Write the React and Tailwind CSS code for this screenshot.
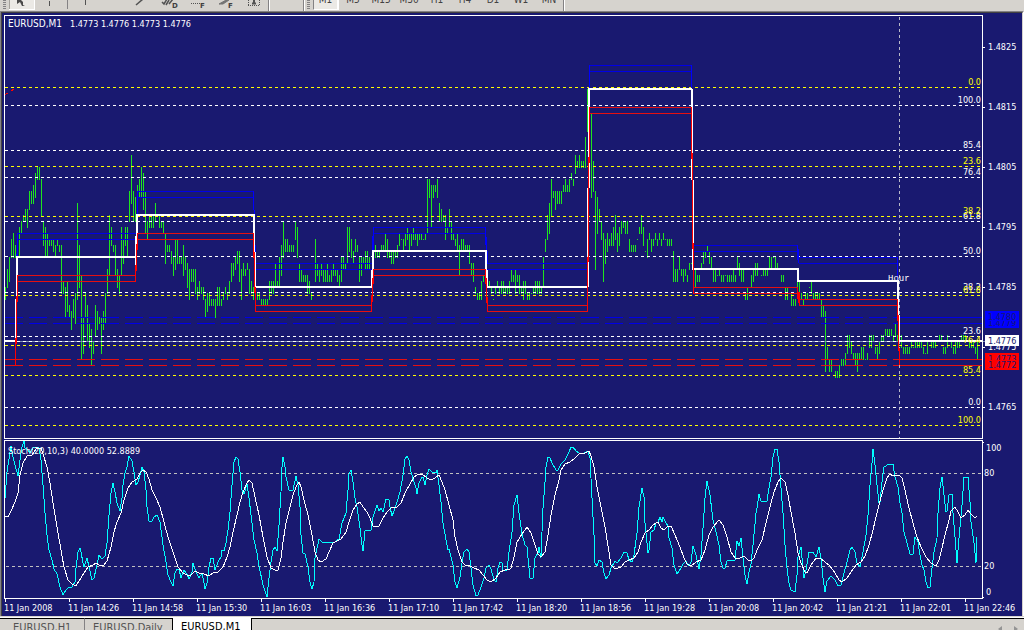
import { useState } from 'react'

// One bar is [high, low] in pips above 1.4700, bars stand 2px apart
const BAR_RUNS = [
    { x: 5, bars: '85-83 88-85 90-86 93-90 94-90 92-90 . 95-90 96-94 97-96 98-96 98-95 101-98 101-99 102-99 104-100 105-103 105-103 103-97 96-92 95-90 94-90 93-92 93-92 93-91 92-90 93-92 92-91 92-84 86-84 85-80 86-81 82-80 81-78 83-80 84-79 99-83 92-85 87-73 80-74 84-80 82-76 79-75 78-72 76-74 82-77 81-78 80-79 80-74 81-78 84-79 88-84 97-87 95-92 92-91 92-87 88-85 87-84 95-87 93-89 95-92 95-90 101-96 107-99 101-96 100-96' },
    { x: 137, bars: '102-97 103-100 105-100 104-98 101-94 96-93 97-95 97-95 97-95 99-96 97-97 97-95 96-95 96-94 94-89 92-91 92-91 91-89 90-87 93-88 93-89 90-89 90-89 92-87 90-88 89-85 88-83 88-86 88-86 88-84 85-83 86-84 85-84 85-83 83-80 84-81 84-82 83-82 83-82 83-80 85-82 85-82 83-82 84-83 85-84 84-83 86-84 89-86 89-87 90-88 91-89 91-86 88-83 89-87 88-87 89-88 88-84 86-84 85-83' },
    { x: 257, bars: '84-83 84-83 83-82 83-82 83-82 83-82 86-83 86-84 86-84 89-85 86-85 90-85 92-87 96-90 93-91 93-91 92-91 92-91 92-91 96-93 95-90 89-86 88-86 87-86 87-86 87-84 86-84 84-83 . 93-86 89-87 88-86 89-87 88-86 88-86 89-86 87-86 88-86 89-87 88-87 88-86 87-85 90-86 90-88 89-88 95-89 95-91 93-90 91-89 93-91 92-91 90-86 90-87 90-89 91-88 91-88 90-88' },
    { x: 373, bars: '93-91 92-90 91-90 91-90 92-91 92-91 94-91 93-90 91-90 91-89 91-89 91-90 92-90 94-92 93-93 93-91 94-92 95-93 94-91 94-92 95-93 94-93 94-92 94-93 94-93 93-93 94-93 103-94 103-100 102-95 102-100 102-101 103-100 99-96 98-96 97-96 97-93 95-94 98-95 96-93 94-93 93-92 94-91 92-87 93-91 93-91 92-91 92-91 92-89 89-87 89-86 85-84 84-83 84-83 86-83 87-86' },
    { x: 487, bars: '86-85 86-85 85-84 83-83 85-84 86-85 85-84 86-84 86-84 85-84 85-84 86-84 88-86 87-86 88-84 87-86 87-84 85-84 86-83 86-84 84-83 84-83 84-84 85-84 86-84 86-84 86-84 85-84 90-85 93-91 97-93 99-94 103-97 101-100 101-98 101-99 101-99 101-99 102-101 103-101 102-101 103-101 104-103 103-102 107-104 106-105 107-105 106-105 106-105 110-105 118-111' },
    { x: 591, bars: '114-100 106-101 101-88 100-94 98-96 96-93 94-86 93-89 94-91 93-92 94-92 95-92 97-93 94-91 95-92 96-94 96-95 96-94 96-94 93-91 92-91 92-91 92-91 93-93 95-94 97-94 95-92 91-91 93-90 94-93 93-91 93-92 94-93 93-92 94-93 93-92 94-93 93-93 93-92 93-92 93-92 91-86 88-86 88-86 90-88 88-87 88-86 88-87 87-86 89-88 89-89' },
    { x: 695, bars: '88-85 87-86 87-86 89-88 91-89 91-90 92-91 91-89 90-88 88-86 88-86 87-87 88-87 87-86 87-86 87-87 87-86 87-86 87-86 88-86 87-86 90-88 89-87 88-86 88-86 84-83 85-83 . 87-85 88-86 89-87 89-87 . 87-87 88-87 88-87 88-87 90-88 90-88 90-90 90-88 89-88 . 87-86 87-86 85-83 85-83 . 84-82 83-82 83-82 87-84' },
    { x: 799, bars: '86-82 84-83 83-82 84-83 84-83 85-85 86-84 84-83 84-83 84-83 84-83 83-80 82-80 81-71 75-73 73-71 73-71 72-72 71-70 71-70 72-70 73-72 73-72 74-72 77-74 77-75 76-74 74-73 74-72 74-71 74-73 75-73 75-73 73-73 74-73 77-75 77-75 77-76 75-74 75-73 76-74 77-76 77-76 78-77 78-77 78-77 78-77 77-76 79-77 77-76' },
    { x: 901, bars: '77-75 75-74 75-74 75-74 75-74 76-75 75-75 76-75 76-75 76-75 76-75 75-74 74-74 76-74 76-76 76-75 76-75 76-75 76-76 77-76 77-76 75-74 75-74 77-75 76-76 76-75 75-74 76-74 76-75 76-75 77-76 77-76 77-76 76-76 76-75 76-75 76-75 75-74 76-73' },
]

const priceY = (pips) => 287 - 6 * (pips - 85)

const BAR_PATH = BAR_RUNS.flatMap((run) =>
    run.bars.split(' ').map((bar, i) => {
        if (bar === '.') return ''
        const [high, low] = bar.split('-').map(Number)
        return `M${run.x + i * 2} ${priceY(high)}h1V${priceY(low) + 1}h-1z`
    })
).join('')

// Hourly level: [from x, to x, y]
const LEVELS = [
    [5, 16, 341],
    [17, 136, 257],
    [137, 254, 215],
    [255, 372, 287],
    [373, 486, 251],
    [487, 588, 287],
    [589, 692, 89],
    [693, 798, 269],
    [799, 898, 281],
    [899, 982, 341],
]

// Vertical joins between the levels: [x, width, top, bottom]
const BLUE_JOINS = [
    [17, 1, 233, 257], [16, 2, 254, 258], [137, 1, 191, 215], [253, 1, 191, 210], [254, 1, 210, 240], [254, 2, 245, 264],
    [373, 1, 227, 243], [372, 2, 236, 251], [485, 1, 227, 245], [486, 1, 237, 251], [487, 1, 251, 264],
    [589, 1, 65, 89], [691, 1, 65, 89], [797, 1, 245, 260], [798, 1, 249, 263], [897, 1, 257, 281],
]
const WHITE_JOINS = [
    [16, 2, 256, 296], [15, 1, 299, 338], [136, 2, 214, 244], [135, 1, 236, 265], [253, 2, 214, 252], [255, 1, 252, 287],
    [372, 2, 250, 278], [371, 1, 270, 287], [485, 2, 250, 278], [487, 1, 270, 287], [588, 2, 88, 157], [589, 1, 163, 188],
    [587, 1, 188, 287], [588, 1, 262, 287], [691, 2, 89, 153], [691, 1, 159, 180], [693, 1, 180, 243], [692, 1, 249, 270],
    [797, 2, 268, 282], [897, 2, 280, 315], [899, 1, 315, 341],
]
const RED_JOINS = [
    [15, 1, 338, 366], [16, 1, 296, 344], [17, 1, 275, 302], [136, 1, 244, 271], [137, 1, 233, 250], [135, 1, 265, 282],
    [253, 1, 233, 258], [254, 1, 252, 293], [255, 1, 287, 312], [373, 1, 269, 284], [372, 1, 278, 302], [371, 1, 295, 312],
    [485, 1, 269, 284], [486, 1, 278, 303], [487, 1, 297, 312], [589, 1, 107, 163], [588, 1, 157, 262], [587, 1, 257, 312],
    [691, 1, 107, 159], [692, 1, 153, 249], [693, 1, 243, 294], [797, 1, 287, 299], [798, 2, 292, 303], [799, 1, 299, 306],
    [897, 1, 299, 321], [898, 1, 315, 351], [899, 1, 348, 365], [12, 2, 89, 90], [11, 2, 90, 91], [5, 1, 94, 95], [6, 2, 93, 94],
]

const FIB_YELLOW = [
    ['0.0', 87], ['23.6', 166], ['38.2', 216], ['61.8', 295], ['76.4', 345], ['85.4', 375], ['100.0', 425],
]
const FIB_WHITE = [
    ['100.0', 105], ['85.4', 150], ['76.4', 177], ['61.8', 221], ['50.0', 256], ['38.2', 292], ['23.6', 336], ['', 341], ['0.0', 407],
]

const PRICES = [
    ['1.4825', 47], ['1.4815', 107], ['1.4805', 167], ['1.4795', 227], ['1.4785', 287], ['1.4775', 347], ['1.4765', 407],
]

const STOCH_MAIN =
    '5,498 7,472 10,452 11,446 13,457 15,465 18,476 20,460 22,447 24,441 25,448 28,450 30,453 33,448 36,447 39,448 41,460 43,485 45,513 47,535 49,550 52,560 54,569 57,574 60,587 63,595 66,590 69,587 72,587 75,582 76,568 78,552 80,548 81,552 83,563 84,567 87,558 89,567 92,580 94,578 97,565 99,555 102,559 105,556 107,543 109,515 111,493 113,483 115,492 117,503 120,511 122,498 123,485 125,473 127,467 129,456 132,461 134,472 136,485 138,482 140,475 142,467 144,472 146,490 147,507 149,521 152,521 154,517 157,515 160,522 163,545 166,562 168,575 171,582 173,586 175,573 177,569 179,569 181,578 184,570 187,574 189,579 192,572 193,563 196,572 199,578 202,573 204,583 205,589 207,583 209,567 211,558 213,558 215,570 218,562 221,557 222,550 224,551 226,543 228,530 230,512 232,485 234,462 236,457 238,459 240,472 242,490 244,494 247,484 249,498 252,523 254,540 257,553 259,566 263,585 267,597 269,578 271,562 273,550 275,547 277,551 279,525 281,492 282,467 283,457 285,467 286,477 289,490 293,490 296,476 298,485 300,507 301,535 303,553 305,554 308,567 310,582 312,589 314,582 315,558 319,539 322,542 335,542 339,539 342,523 346,513 348,490 349,474 351,470 353,482 355,498 357,507 360,528 362,545 363,551 365,531 371,530 373,517 375,511 377,505 379,511 381,508 383,512 386,499 389,500 390,507 392,516 394,511 397,502 400,492 403,475 405,459 407,456 409,460 411,472 414,482 416,488 417,494 419,483 422,477 423,477 425,485 427,475 429,469 432,472 436,473 437,470 439,485 441,502 443,523 446,540 448,550 449,549 451,557 453,565 455,582 457,588 460,577 462,563 464,552 467,549 469,552 471,568 473,585 476,596 478,595 481,587 484,578 486,568 489,565 491,569 494,580 496,582 498,568 500,562 502,563 503,571 507,570 509,552 512,532 514,505 517,495 519,513 522,534 525,545 527,547 529,568 530,578 533,578 535,558 538,553 539,547 541,558 542,532 543,508 545,482 546,467 548,457 550,458 552,463 556,470 558,470 561,464 565,460 569,452 571,447 573,447 576,451 580,454 584,453 588,451 590,458 592,498 594,535 595,563 597,566 599,560 602,562 604,573 606,579 609,575 611,568 615,561 617,563 621,558 624,552 627,553 629,560 632,562 634,555 637,533 639,507 642,488 644,497 645,523 648,553 649,550 651,532 654,530 656,523 658,522 660,517 662,522 663,517 666,523 668,526 669,538 672,548 674,565 677,574 681,568 683,564 686,561 689,566 691,562 693,546 696,555 699,569 701,555 703,528 705,498 707,481 710,495 713,520 716,532 719,545 721,562 723,568 725,568 727,561 735,560 737,541 739,546 741,538 743,558 745,575 747,584 749,572 751,564 753,545 756,513 757,508 759,494 761,501 767,501 769,488 771,477 773,457 775,449 777,449 779,462 781,488 783,513 785,545 787,568 789,583 791,590 795,592 797,575 798,557 801,547 802,558 804,578 806,570 809,552 813,552 816,557 819,547 821,558 823,578 825,592 827,581 831,576 835,580 838,586 841,585 844,573 847,562 850,550 852,547 855,552 857,563 860,567 863,552 866,535 868,515 870,485 872,463 873,449 875,465 877,485 879,503 880,502 882,482 884,467 889,464 893,464 895,477 898,487 900,503 902,513 904,532 907,543 910,554 913,554 915,537 918,542 920,555 922,565 924,570 926,582 928,588 930,587 932,568 934,552 937,538 938,513 940,488 942,477 944,495 946,512 947,511 949,495 952,494 953,513 955,537 957,563 959,538 962,505 964,477 968,477 970,502 971,522 974,543 976,563 977,537'

const STOCH_SIGNAL =
    '5,516 8,517 11,511 15,502 18,493 20,475 23,463 27,456 32,455 36,449 41,448 43,454 47,467 50,483 53,503 57,527 61,550 64,567 68,580 72,584 76,586 79,581 84,573 88,567 93,565 96,563 99,565 104,565 107,561 111,547 114,532 117,522 121,513 124,500 128,488 132,482 137,479 140,473 143,470 146,472 149,479 152,490 156,498 160,507 164,522 168,537 173,552 178,567 183,573 187,575 191,575 195,571 199,573 204,574 209,576 213,573 218,572 223,567 227,557 230,547 233,532 237,515 240,502 243,492 247,483 249,480 252,483 255,497 259,515 263,537 267,557 271,568 275,570 278,570 281,558 283,542 286,523 290,507 293,495 296,487 299,482 301,487 304,500 308,515 312,535 315,552 318,560 321,562 326,559 329,552 333,543 337,541 341,539 346,532 349,522 353,510 357,504 360,502 363,507 367,512 370,518 373,526 379,526 383,518 387,512 391,508 397,507 401,503 405,493 410,484 414,477 419,474 422,474 427,478 431,480 435,478 439,475 442,482 445,490 449,505 453,520 455,537 458,550 462,562 465,565 470,566 474,568 479,570 483,575 487,580 491,582 496,578 500,572 505,570 510,569 511,568 514,557 517,542 522,534 527,527 531,533 535,545 538,554 541,557 545,552 548,535 551,515 555,495 559,480 561,470 565,464 570,462 574,459 579,454 585,453 589,451 591,456 594,467 597,487 601,507 605,527 609,552 611,565 615,569 621,567 625,562 629,560 634,558 638,552 641,542 645,533 649,530 653,525 658,522 661,528 664,530 668,526 671,526 675,535 680,547 684,558 687,564 691,566 696,562 701,560 705,550 709,535 713,527 719,520 723,525 727,537 731,552 735,558 740,558 744,556 748,560 752,560 754,558 757,550 762,540 766,523 770,507 774,492 778,482 781,478 785,482 788,495 791,512 795,533 798,553 801,563 805,572 807,573 811,565 816,558 820,558 825,562 830,566 835,573 839,580 842,582 847,578 851,572 856,565 861,562 865,556 869,545 873,530 876,517 879,505 883,490 887,478 890,474 893,476 899,475 902,478 905,490 909,508 913,523 917,537 921,547 926,557 931,563 936,566 939,560 942,548 945,535 949,520 951,511 955,507 958,512 961,518 965,515 968,510 971,514 975,518 977,516'

const TIMES = [
    '11 Jan 2008', '11 Jan 14:26', '11 Jan 14:58', '11 Jan 15:30', '11 Jan 16:03', '11 Jan 16:36', '11 Jan 17:10', '11 Jan 17:42',
    '11 Jan 18:20', '11 Jan 18:56', '11 Jan 19:28', '11 Jan 20:08', '11 Jan 20:42', '11 Jan 21:21', '11 Jan 22:01', '11 Jan 22:46',
]

const TIMEFRAMES = ['M1', 'M5', 'M15', 'M30', 'H1', 'H4', 'D1', 'W1', 'MN']
const TABS = [
    { name: 'EURUSD,H1', size: 'w-[85px] pl-[13px] border-r border-r-[#848284]' },
    { name: 'EURUSD,Daily', size: 'w-[87px] pl-2' },
    { name: 'EURUSD,M1', size: 'w-20 pl-2' },
]

function Joins({ items, color }) {
    return items.map(([x, w, y1, y2]) => (
        <rect key={`${x}-${y1}`} x={x} y={y1} width={w} height={y2 - y1} fill={color} />
    ))
}

function Channel({ offsets, color }) {
    return LEVELS.slice(1).flatMap(([x1, x2, y]) =>
        offsets.map((d) => <rect key={`${x1}${d}`} x={x1} y={y + d} width={x2 - x1} height="1" fill={color} />)
    )
}

function FibLines({ lines, color }) {
    return lines.map(([label, y]) => (
        <line key={y} x1="5" x2="981" y1={y + 0.5} y2={y + 0.5} stroke={color} strokeDasharray="3 3" />
    ))
}

function FibLabels({ lines, color }) {
    return lines.map(([label, y]) => (
        <text key={y} x="981" y={y - 2} textAnchor="end" fill={color}>{label}</text>
    ))
}

function PricePlot() {
    return (
        <svg className="block w-full h-[422px] text-[9px]" shapeRendering="crispEdges">
            <g transform="translate(-5 -16)">
                <path d={BAR_PATH} fill="#1ee61e" />
                <rect x="5" y="341" width="977" height="1" fill="#7f8fb5" />

                <Channel offsets={[-24, -18]} color="#0000e6" />
                <Channel offsets={[18, 24]} color="#e61010" />
                {[317, 323].map((y) => (
                    <line key={y} x1="5" x2="982" y1={y + 0.5} y2={y + 0.5} stroke="#0000e6" strokeDasharray="18 6" />
                ))}
                {[359, 365].map((y) => (
                    <line key={y} x1="5" x2="982" y1={y + 0.5} y2={y + 0.5} stroke="#e61010" strokeDasharray="18 6" />
                ))}

                <FibLines lines={FIB_YELLOW} color="#ffff00" />
                <FibLines lines={FIB_WHITE} color="#ffffff" />
                <line x1="899.5" x2="899.5" y1="17" y2="438" stroke="#b8b8c8" strokeDasharray="3 3" />

                <Joins items={BLUE_JOINS} color="#0000ff" />
                {LEVELS.map(([x1, x2, y]) => (
                    <rect key={x1} x={x1} y={y - 1} width={x2 - x1} height="2" fill="#fff" />
                ))}
                <Joins items={WHITE_JOINS} color="#ffffff" />
                <Joins items={RED_JOINS} color="#ff0000" />

                <FibLabels lines={FIB_WHITE} color="#ffffff" />
                <FibLabels lines={FIB_YELLOW} color="#ffff00" />
                <text x="888" y="281" fill="#fff" className="font-['Liberation_Mono',monospace]">Hour</text>
                <text x="8" y="27" fill="#fff" className="text-[10px]">EURUSD,M1</text>
                <text x="70" y="27" fill="#fff">1.4773 1.4776 1.4773 1.4776</text>
            </g>
        </svg>
    )
}

function PriceScale() {
    return (
        <svg className="block w-full h-full text-[9px]" shapeRendering="crispEdges">
            <g transform="translate(-983 -15)">
                {PRICES.map(([label, y]) => (
                    <g key={label} fill="#fff">
                        <rect x="983" y={y} width="2" height="1" />
                        <text x="988" y={y + 3}>{label}</text>
                    </g>
                ))}
                <rect x="985" y="311" width="34" height="17" fill="#0000ff" />
                <text x="988" y="326" fill="#191970">1.4779</text>
                <rect x="985" y="311" width="34" height="10" fill="#0000ff" />
                <text x="988" y="320" fill="#191970">1.4780</text>
                <rect x="983" y="341" width="2" height="1" fill="#7f8fb5" />
                <rect x="985" y="335" width="34" height="11" fill="#fff" />
                <text x="988" y="344" fill="#191970">1.4776</text>
                <rect x="985" y="353" width="34" height="17" fill="#ff0000" />
                <text x="988" y="362" fill="#191970">1.4773</text>
                <rect x="985" y="360" width="34" height="10" fill="#ff0000" />
                <text x="988" y="368" fill="#191970">1.4772</text>
            </g>
        </svg>
    )
}

function StochPlot() {
    return (
        <svg className="block w-full h-[157px] text-[9px]" shapeRendering="crispEdges">
            <g transform="translate(-5 -441)" fill="none">
                <line x1="6" x2="982" y1="473.5" y2="473.5" stroke="#c0c0c0" strokeDasharray="3 3" />
                <line x1="6" x2="982" y1="566.5" y2="566.5" stroke="#c0c0c0" strokeDasharray="3 3" />
                <polyline points={STOCH_MAIN} stroke="#00ffff" />
                <polyline points={STOCH_SIGNAL} stroke="#ffffff" />
                <text x="8" y="454" fill="#fff">Stoch(20,10,3) 40.0000 52.8889</text>
            </g>
        </svg>
    )
}

function Grip() {
    return (
        <div className="flex flex-col gap-px pb-[2px]">
            {[0, 1, 2, 3, 4].map((i) => <i key={i} className="w-[3px] h-px bg-[#848284]" />)}
        </div>
    )
}

function ToolIcons() {
    return (
        <svg width="259" height="10" viewBox="9 0 259 10" fill="none" stroke="#525252" role="img" aria-label="Drawing tools">
            <rect x="9" y="0" width="25" height="9" fill="#ebe9e5" stroke="none" />
            <path d="M34.500 0V9.500M9 9.500H35" stroke="#fff" />
            <path d="M9.500 0V9" stroke="#a5a29c" />
            <path d="M17 0h4l2 2v3l2 1h-3l-2-4-3 2z" fill="#4a4a4a" stroke="none" />
            <path d="M49.500 1V6M85.500 0V5" />
            <path d="M67.500 0V9" stroke="#848284" />
            <path d="M136 5l7-6" strokeWidth="1.500" />
            <path d="M162 2l2 2 3-5M166 5l3-5M169 4l4-5" strokeWidth="1.500" />
            <path d="M191 3.500H202" strokeDasharray="1 1" />
            <path d="M219 4l9-5 1 1-6 4z" fill="#737373" stroke="#737373" />
            <path d="M248.500 0V6M248 5.500H260M259.500 0V6" strokeDasharray="1 1" />
            <path d="M254 0V3M252 3.500h4" strokeWidth="2" />
            <g fill="#424142" stroke="none" className="text-[7px] font-bold font-['DejaVu_Sans',sans-serif]">
                <text x="172" y="8">D</text>
                <text x="200" y="8">F</text>
                <text x="228" y="8">F</text>
            </g>
        </svg>
    )
}

export default function App() {
    const [frame, setFrame] = useState('M1')
    const [tab, setTab] = useState('EURUSD,M1')

    return (
        <div className="h-screen flex flex-col overflow-hidden bg-[#d6d3ce] text-[10px] leading-none font-['DejaVu_Sans_Condensed','DejaVu_Sans',sans-serif]">
            {/* Toolbar */}
            <header className="h-[11px] shrink-0 flex items-start overflow-hidden">
                <div className="h-full flex items-start pl-[3px] gap-[3px] border-r border-[#848284]">
                    <Grip />
                    <ToolIcons />
                </div>
                <div className="w-[35px] h-full border-l border-l-white border-r border-r-[#848284]" />
                <div className="h-full flex items-start pl-[2px] gap-[3px] border-l border-l-white border-r border-r-[#848284]">
                    <Grip />
                    <nav className="h-[10px] flex items-end overflow-hidden">
                        {TIMEFRAMES.map((t) => (
                            <button key={t} type="button" onClick={() => setFrame(t)}
                                className={`h-5 shrink-0 flex justify-center items-center text-[#424142] ${frame === t ? 'w-[26px] bg-[#ebe9e5] border-r-2 border-b border-white border-l border-l-[#848284]' : 'w-7'}`}>
                                {t}
                            </button>
                        ))}
                    </nav>
                </div>
                <div className="w-px h-full bg-white" />
            </header>

            {/* Chart window */}
            <main className="shrink-0 bg-[#191970] border-t border-t-[#848284] border-l border-l-[#848284] border-r border-r-white">
                <div className="border-t border-l border-[#424142] border-r border-r-[#d6d3ce]">
                    <div className="pl-[2px] pt-[2px]">
                        <section className="flex">
                            <div className="flex-1 min-w-0 border border-white"><PricePlot /></div>
                            <div className="w-[39px]"><PriceScale /></div>
                        </section>
                        <section className="flex pt-px text-white text-[9px]">
                            <div className="flex-1 min-w-0 border border-white"><StochPlot /></div>
                            <svg className="block w-[39px] h-[159px]" fill="#fff" shapeRendering="crispEdges">
                                <path d="M0 2h1v1h-1zM0 157h1v1h-1z" />
                                <text x="3" y="11">100</text>
                                <text x="1" y="36">80</text>
                                <text x="1" y="129">20</text>
                                <text x="3" y="155">0</text>
                            </svg>
                        </section>
                        <div className="flex h-[17px] overflow-hidden text-white text-[9px] pl-px">
                            {TIMES.map((t) => (
                                <div key={t} className="w-16 shrink-0 whitespace-nowrap">
                                    <div className="w-px h-[3px] bg-white" />
                                    <div className="-ml-px pt-[2px]">{t}</div>
                                </div>
                            ))}
                        </div>
                    </div>
                </div>
            </main>

            {/* Chart tabs */}
            <footer className="flex-1 min-h-0 flex border-t border-white mt-px overflow-hidden text-[11px]">
                <div className="flex items-start">
                    {TABS.map(({ name, size }) => (
                        <button key={name} type="button" onClick={() => setTab(name)}
                            className={`h-5 text-left whitespace-nowrap pb-[3px] ${size} ${tab === name
                                ? 'bg-white text-black border-x border-x-black'
                                : 'text-[#525252] border-t border-t-black'}`}>
                            {name}
                        </button>
                    ))}
                </div>
                <div className="flex-1 border-t border-black flex justify-end items-start gap-3 pr-[6px] pt-[7px]">
                    <svg width="4" height="6" viewBox="0 0 4 6" fill="#949494"><path d="M4 0v6L0 3z" /></svg>
                    <svg width="4" height="6" viewBox="0 0 4 6" fill="#949494"><path d="M0 0v6l4-3z" /></svg>
                </div>
            </footer>
        </div>
    )
}
